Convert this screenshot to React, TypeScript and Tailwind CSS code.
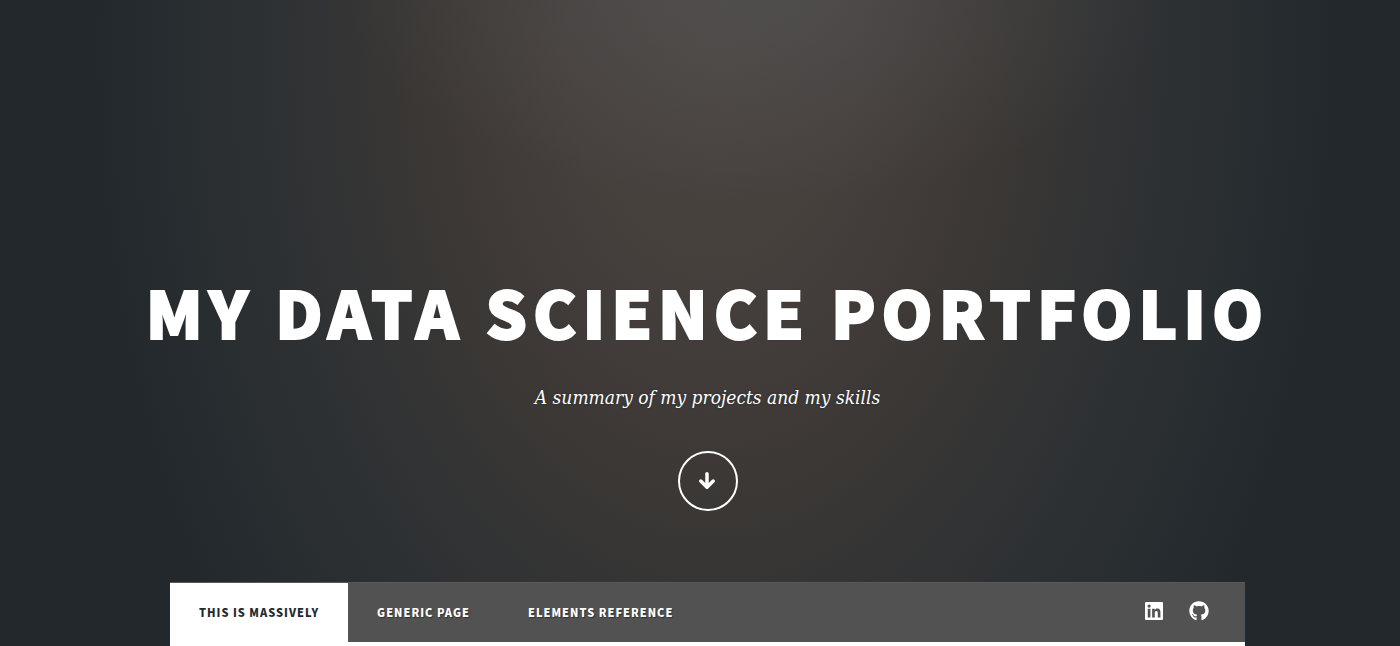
import React from "react";
import { FaGithub } from "react-icons/fa";

const links = [
  { label: "This is Massively", active: true },
  { label: "Generic Page", active: false },
  { label: "Elements Reference", active: false },
];

function ArrowDown() {
  return (
    <svg viewBox="0 0 20 20" className="size-5" fill="none" stroke="currentColor" strokeWidth="3.5" strokeLinecap="round" strokeLinejoin="round" aria-hidden="true">
      <path d="M9 2.8V16M2.8 10L9 16.2L15.2 10" />
    </svg>
  );
}

function LinkedIn() {
  return (
    <svg viewBox="0 0 448 448" className="size-[18px]" fill="currentColor" aria-hidden="true">
      <path d="M416 0H32C14 0 0 14 0 32v384c0 18 14 32 32 32h384c18 0 32-14 32-32V32c0-18-14-32-32-32zM135 384H69V170h66v214zM102 141a38 38 0 1 1 0-77 38 38 0 0 1 0 77zM384 384h-66V280c0-25-1-57-35-57-35 0-40 27-40 55v106h-66V170h64v29h1c9-17 30-35 63-35 67 0 79 44 79 102v118z" />
    </svg>
  );
}

export default function App() {
  return (
    <div className="flex min-h-screen flex-col bg-[#23282c] bg-[radial-gradient(ellipse_420px_220px_at_54%_-20px,#5c606466_0%,#5c606433_50%,#5c606400_100%),radial-gradient(ellipse_650px_1000px_at_51%_50px,#4a4440_0%,#46403d_22%,#3c3835_43%,#303234_64%,#292e31_80%,#23282c_96%)] pl-[15px] font-['Noto_Sans_CJK_SC','Noto_Sans',sans-serif] text-white">
      <header className="flex flex-col items-center pt-[261px] text-center [text-shadow:0_0_2px_#22272b]">
        <h1 className="whitespace-nowrap text-[65px] leading-[100px] font-black uppercase tracking-[6px] [-webkit-text-stroke:2px_white]">
          My Data Science Portfolio
        </h1>
        <p className="mt-5 font-['DejaVu_Serif_Condensed','DejaVu_Serif',serif] text-[19px] leading-8 italic">
          A summary of my projects and my skills
        </p>
        <a href="#nav" aria-label="Continue" className="mt-[38px] flex size-[60px] items-center justify-center rounded-full border-2 border-white">
          <ArrowDown />
        </a>
      </header>
      <div className="mx-auto mt-[71px] flex w-full max-w-[1075px] flex-1 flex-col">
        <nav id="nav" className="flex h-[60px] border-t border-[#5e5855] bg-[#525252]">
          <ul className="flex">
            {links.map((link) => (
              <li key={link.label} className="flex">
                <a
                  href="#"
                  className={
                    link.active
                      ? "flex items-center bg-white px-[29px] text-[11px] font-black uppercase tracking-[1px] text-[#212931]"
                      : "flex items-center px-[29px] text-[11px] font-black uppercase tracking-[1px] [text-shadow:1px_1px_1px_#303030]"
                  }
                >
                  {link.label}
                </a>
              </li>
            ))}
          </ul>
          <div className="ml-auto flex items-center gap-[26px] pr-9 pb-1">
            <a href="#" aria-label="LinkedIn"><LinkedIn /></a>
            <a href="#" aria-label="GitHub"><FaGithub className="size-5" /></a>
          </div>
        </nav>
        <main className="min-h-1 flex-1 bg-white" />
      </div>
    </div>
  );
}
